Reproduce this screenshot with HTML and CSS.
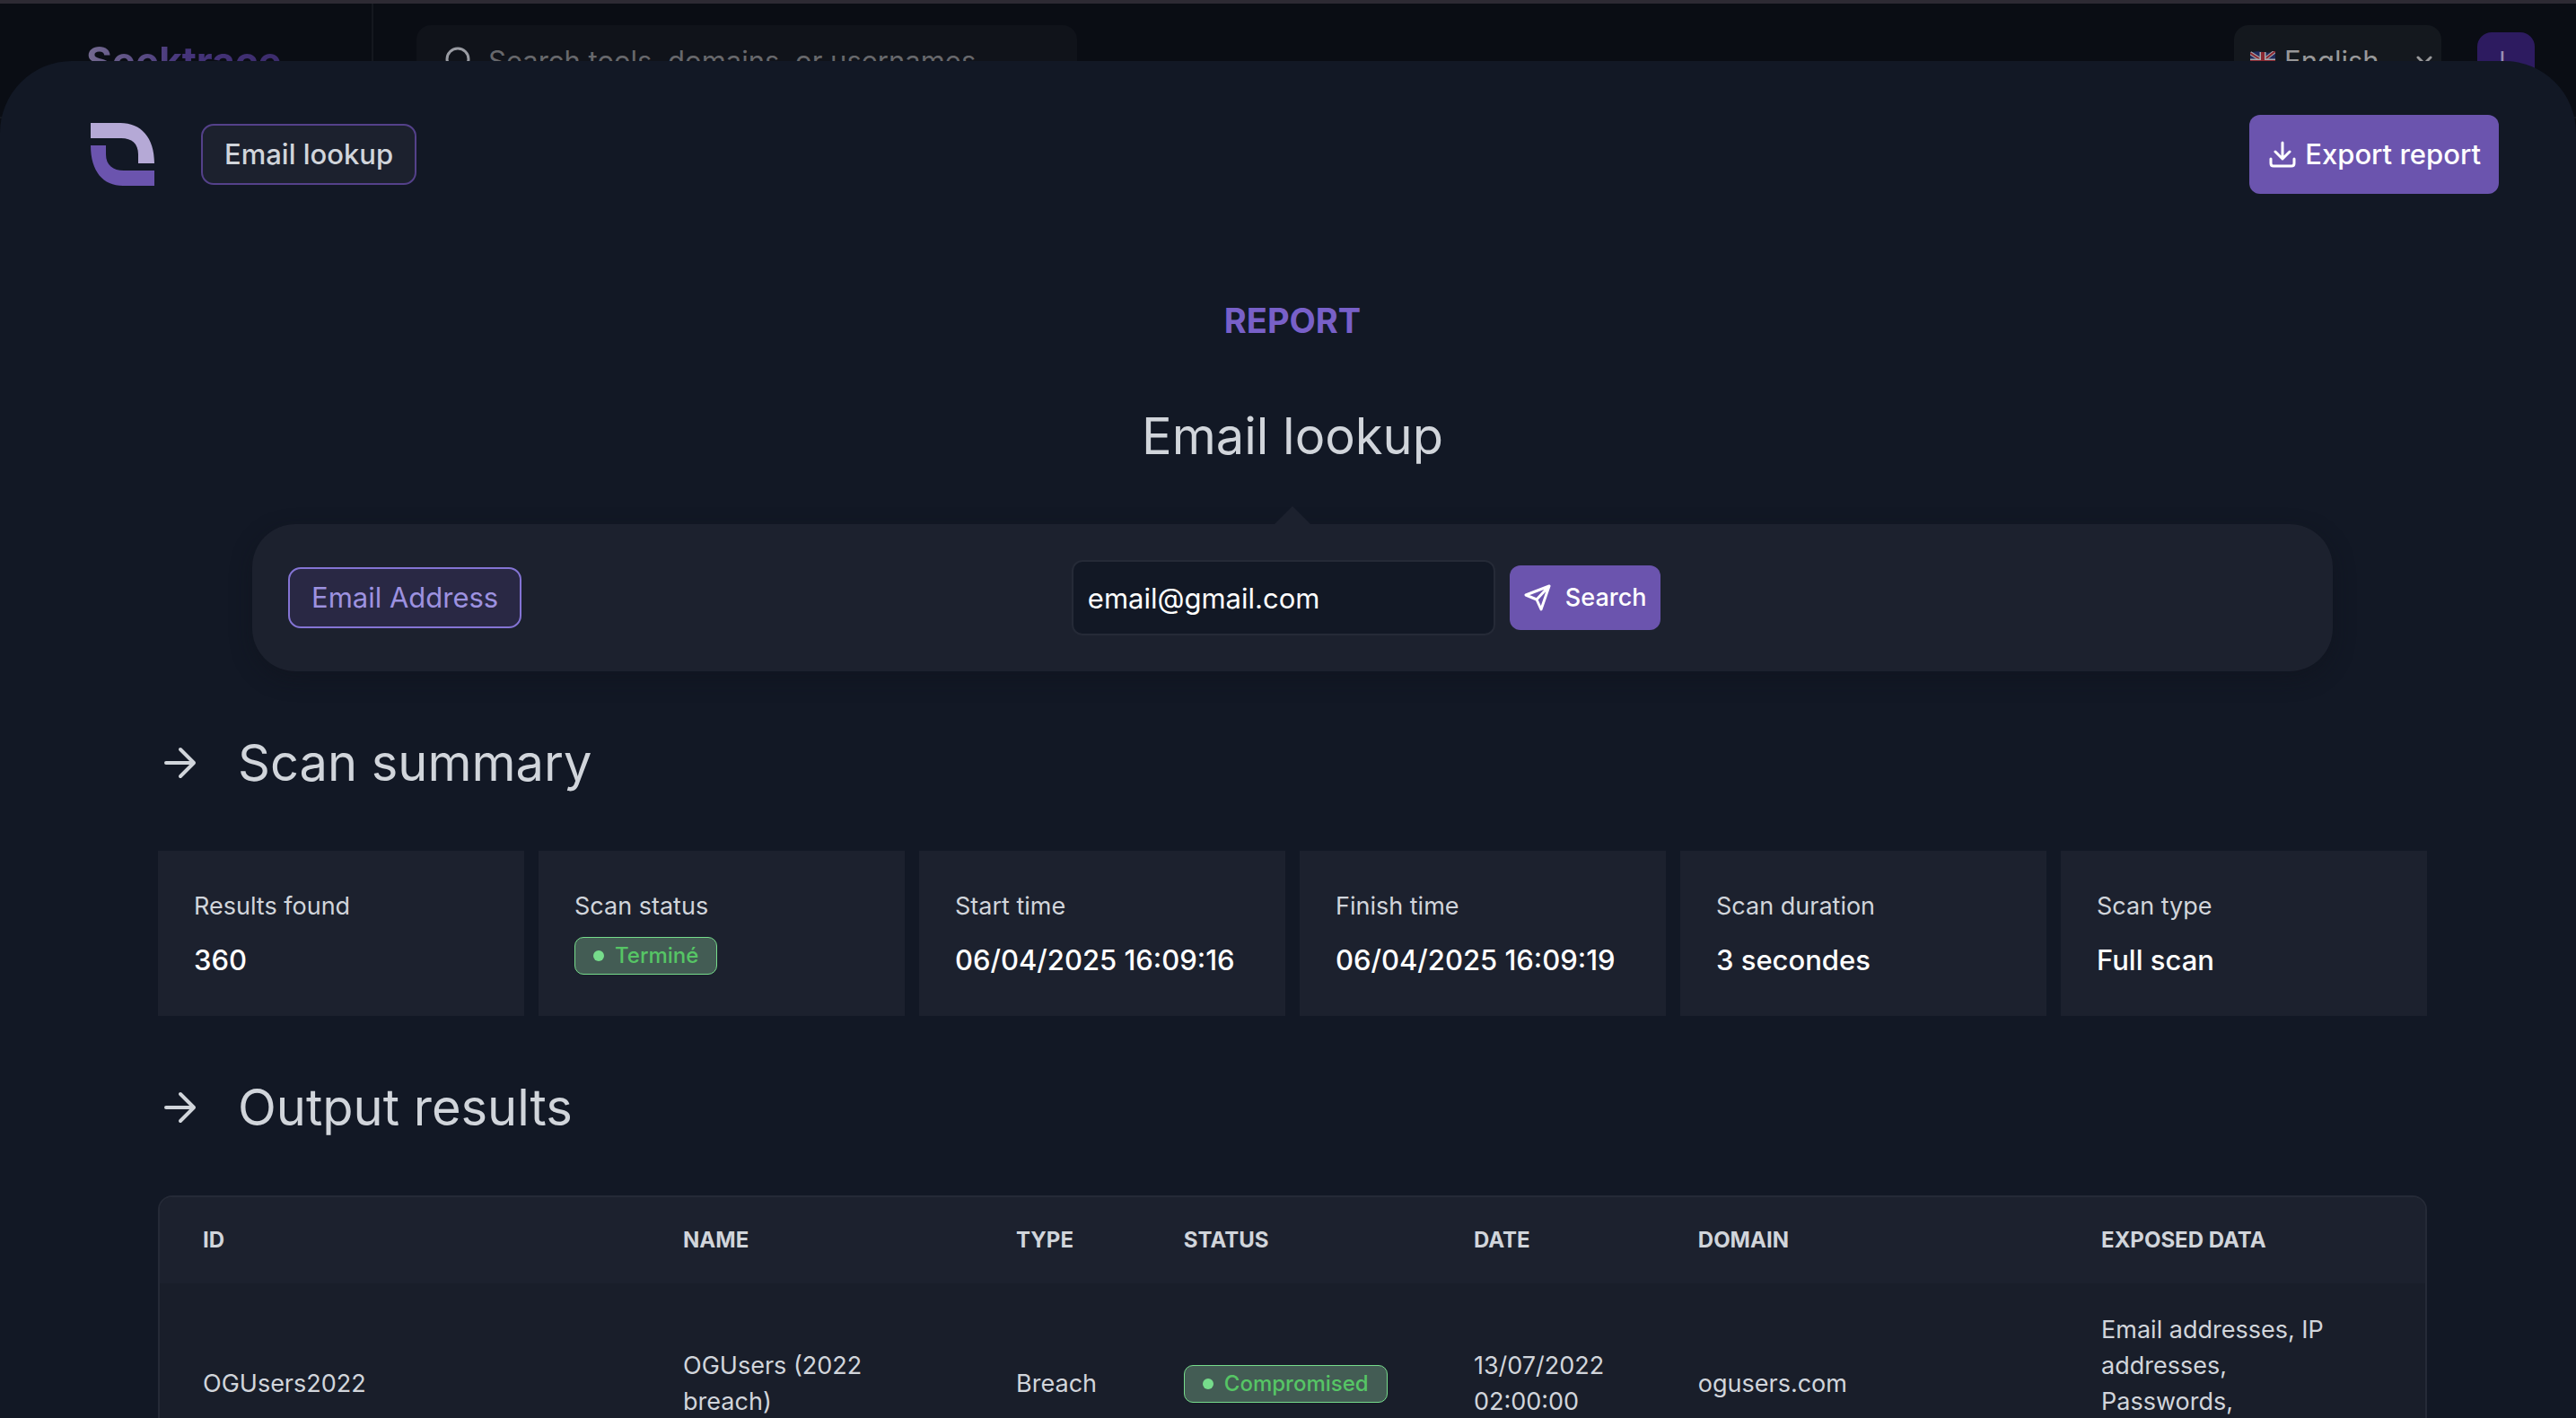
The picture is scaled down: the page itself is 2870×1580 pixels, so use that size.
FILE: index.html
```html
<!DOCTYPE html>
<html lang="en">
<head>
  <meta charset="UTF-8">
  <meta name="viewport" content="width=device-width, initial-scale=1.0">
  <title>Seektrace - Email lookup</title>
  <link rel="stylesheet" href="styles.css">
</head>
<body>

  <!-- Top bar (behind the report) -->
  <header class="topbar">
    <div class="brand"><span>Seektrace</span></div>
    <div class="topbar-main">
      <div class="search-box">
        <svg class="search-icon" viewBox="0 0 32 32" fill="none" stroke="currentColor" stroke-width="3" stroke-linecap="round">
          <circle cx="14" cy="14" r="12"/>
          <path d="M23 23l7 7"/>
        </svg>
        <input type="text" aria-label="Search" placeholder="Search tools, domains, or usernames">
      </div>
      <div class="topbar-right">
        <div class="language">
          <svg class="flag" viewBox="0 0 28 22">
            <path fill="#1f2a5c" d="M0 2Q7-1 14 1T28 0V20Q21 23 14 21T0 22Z"/>
            <path stroke="#a9a9ad" stroke-width="4" d="M0 2L28 20M28 0L0 22"/>
            <path stroke="#8a2730" stroke-width="2" d="M0 2L28 20M28 0L0 22"/>
            <path stroke="#a9a9ad" stroke-width="7" d="M14 1V21M0 12H28"/>
            <path stroke="#8a2730" stroke-width="4" d="M14 1V21M0 12H28"/>
          </svg>
          <select aria-label="Language">
            <option>English</option>
          </select>
          <svg class="chevron" viewBox="0 0 18 12" fill="none" stroke="currentColor" stroke-width="3" stroke-linecap="round" stroke-linejoin="round">
            <path d="M2 2l7 7 7-7"/>
          </svg>
        </div>
        <button class="avatar">L</button>
      </div>
    </div>
  </header>

  <!-- Report -->
  <main class="report">
    <div class="report-header">
      <svg class="logo" viewBox="0 0 71 70">
        <path fill="#b5a9d6" d="M0 0H33C56 0 71 16 71 45H53V35C53 23 46 17 34 17H0Z"/>
        <path fill="#6b54ae" d="M0 25H17V35C17 47 25 53 37 53H71V70H36C14 70 0 54 0 25Z"/>
      </svg>
      <span class="tag">Email lookup</span>
      <button class="btn btn-export">
        <svg class="icon-export" viewBox="0 0 30 30" fill="none" stroke="currentColor" stroke-width="3" stroke-linecap="round" stroke-linejoin="round">
          <path d="M15 2v18M7 12l8 8 8-8M2 20v5q0 3 3 3h20q3 0 3-3v-5"/>
        </svg>
        Export report
      </button>
    </div>

    <div class="report-body">
      <p class="overline">Report</p>
      <h1>Email lookup</h1>

      <form class="lookup">
        <label class="tag tag-active" for="email">Email Address</label>
        <div class="lookup-field">
          <input type="text" id="email" value="email@gmail.com">
          <button type="button" class="btn btn-search">
            <svg class="icon-send" viewBox="0 0 30 30" fill="none" stroke="currentColor" stroke-width="3" stroke-linecap="round" stroke-linejoin="round">
              <path d="M28 2L2 12l12 5 5 11zM28 2L14 17"/>
            </svg>
            Search
          </button>
        </div>
      </form>

      <!-- Summary -->
      <h2>
        <svg class="arrow" viewBox="0 0 36 36" fill="none" stroke="currentColor" stroke-width="4" stroke-linecap="round" stroke-linejoin="round">
          <path d="M2 18h31M18 3l15 15-15 15"/>
        </svg>
        Scan summary
      </h2>
      <div class="cards">
        <div class="card">
          <div class="card-label">Results found</div>
          <div class="card-value">360</div>
        </div>
        <div class="card">
          <div class="card-label">Scan status</div>
          <span class="badge">Terminé</span>
        </div>
        <div class="card">
          <div class="card-label">Start time</div>
          <div class="card-value">06/04/2025 16:09:16</div>
        </div>
        <div class="card">
          <div class="card-label">Finish time</div>
          <div class="card-value">06/04/2025 16:09:19</div>
        </div>
        <div class="card">
          <div class="card-label">Scan duration</div>
          <div class="card-value">3 secondes</div>
        </div>
        <div class="card">
          <div class="card-label">Scan type</div>
          <div class="card-value">Full scan</div>
        </div>
      </div>

      <!-- Results -->
      <h2>
        <svg class="arrow" viewBox="0 0 36 36" fill="none" stroke="currentColor" stroke-width="4" stroke-linecap="round" stroke-linejoin="round">
          <path d="M2 18h31M18 3l15 15-15 15"/>
        </svg>
        Output results
      </h2>
      <div class="table-wrap">
        <table>
          <colgroup>
            <col class="col-id">
            <col class="col-name">
            <col class="col-type">
            <col class="col-status">
            <col class="col-date">
            <col class="col-domain">
            <col class="col-data">
          </colgroup>
          <thead>
            <tr>
              <th>ID</th>
              <th>Name</th>
              <th>Type</th>
              <th>Status</th>
              <th>Date</th>
              <th>Domain</th>
              <th>Exposed data</th>
            </tr>
          </thead>
          <tbody>
            <tr>
              <td>OGUsers2022</td>
              <td>OGUsers (2022 breach)</td>
              <td>Breach</td>
              <td><span class="badge">Compromised</span></td>
              <td>13/07/2022 02:00:00</td>
              <td>ogusers.com</td>
              <td><div class="exposed">Email addresses, IP addresses, Passwords, Usernames</div></td>
            </tr>
          </tbody>
        </table>
      </div>
    </div>
  </main>

</body>
</html>
```

FILE: styles.css
```css
/* General Styles */
* {
  box-sizing: border-box;
}

body {
  margin: 0;
  height: 100vh;
  overflow: hidden;
  font-family: 'Inter', 'Liberation Sans', sans-serif;
  font-size: 27px;
  line-height: 40px;
  color: #d1d5db;
  background-color: #0a0d14;
  border-top: 4px solid #2d2a33;
}

input, select, button {
  font-family: inherit;
  line-height: inherit;
}

/* Top Bar */
.topbar {
  display: flex;
  height: 128px;
  border-bottom: 2px solid #15181f;
}

.brand {
  width: 416px;
  padding: 38px 0 0 96px;
  border-right: 2px solid #15181f;
  font-size: 44px;
  line-height: 52px;
  font-weight: 700;
}

.brand span {
  color: transparent;
  background: linear-gradient(90deg, #746a90, #45347a 50%, #3c2c6c);
  -webkit-background-clip: text;
  background-clip: text;
}

.topbar-main {
  flex: 1;
  display: flex;
  justify-content: space-between;
  align-items: flex-start;
  padding: 24px 46px 0 48px;
}

.search-box {
  display: flex;
  align-items: center;
  gap: 16px;
  width: 736px;
  height: 80px;
  padding: 0 32px;
  border-radius: 16px;
  background-color: #10131a;
}

.search-icon {
  width: 32px;
  height: 32px;
  color: #9a9ca3;
}

.search-box input {
  flex: 1;
  padding: 0;
  border: none;
  outline: none;
  font-size: 31px;
  color: #67686c;
  background: none;
}

.search-box input::placeholder {
  color: #67686c;
}

.topbar-right {
  display: flex;
  align-items: center;
  gap: 40px;
}

.language {
  display: flex;
  align-items: center;
  width: 231px;
  height: 80px;
  padding: 0 10px 0 18px;
  border-radius: 16px;
  color: #98989a;
  background-color: #14181e;
}

.flag {
  width: 28px;
  height: 22px;
}

.language select {
  flex: 1;
  min-width: 0;
  padding: 0 0 0 10px;
  border: none;
  appearance: none;
  font-size: 31px;
  color: inherit;
  background: none;
}

.chevron {
  width: 18px;
  height: 12px;
}

.avatar {
  width: 64px;
  height: 64px;
  padding: 0;
  border: none;
  border-radius: 16px;
  font-size: 27px;
  color: #9a8fb5;
  background-color: #2d1b60;
}

/* Report */
.report {
  position: fixed;
  top: 68px;
  right: 0;
  bottom: 0;
  left: 0;
  overflow: hidden;
  border-radius: 80px 80px 0 0;
  background-color: #121825;
}

.report-header {
  display: flex;
  align-items: center;
  padding: 60px 86px 0 101px;
}

.logo {
  width: 71px;
  height: 70px;
  margin-right: 52px;
}

.tag {
  padding: 12px 24px;
  border: 2px solid #54418a;
  border-radius: 14px;
  font-size: 31px;
  font-weight: 500;
  background-color: #1c212e;
}

.tag-active {
  border-color: #8474d4;
  font-weight: 400;
  color: #9d92e0;
  background-color: #292844;
}

.btn {
  display: flex;
  align-items: center;
  border: none;
  border-radius: 12px;
  font-weight: 500;
  color: #fff;
  background-color: #6b54ae;
  cursor: pointer;
}

.btn:hover {
  background-color: #7860c8;
}

.btn-export {
  gap: 10px;
  height: 88px;
  margin-left: auto;
  padding: 0 20px 0 22px;
  font-size: 31px;
}

.icon-export {
  width: 30px;
  height: 30px;
}

.report-body {
  padding: 117px 166px 0 176px;
}

.overline {
  margin: 0;
  text-align: center;
  text-transform: uppercase;
  font-size: 38px;
  line-height: 48px;
  font-weight: 700;
  color: #7860c8;
}

h1, h2 {
  margin: 0;
  font-size: 56px;
  line-height: 72px;
  font-weight: 400;
}

h1 {
  margin-top: 69px;
  text-align: center;
}

h2 {
  display: flex;
  align-items: center;
  gap: 46px;
  padding-left: 7px;
}

.arrow {
  width: 36px;
  height: 36px;
}

/* Lookup Form */
.lookup {
  position: relative;
  display: grid;
  grid-template-columns: 39% 1fr;
  align-items: center;
  height: 164px;
  margin: 62px 105px 66px;
  padding: 0 40px;
  border-radius: 48px;
  background-color: #1c212e;
  box-shadow: 0 8px 24px rgba(16, 18, 26, 0.4);
}

.lookup::before {
  content: "";
  position: absolute;
  top: -20px;
  left: calc(50% - 20px);
  border: 20px solid transparent;
  border-top: none;
  border-bottom-color: #1c212e;
}

.lookup .tag {
  justify-self: start;
}

.lookup-field {
  display: flex;
  align-items: center;
  gap: 16px;
}

.lookup-field input {
  width: 472px;
  height: 84px;
  padding: 0 16px;
  border: 2px solid #252a37;
  border-radius: 12px;
  outline: none;
  font-size: 31px;
  color: #fff;
  background-color: #121825;
}

.btn-search {
  gap: 16px;
  height: 72px;
  padding: 0 16px;
  font-size: 27px;
}

.icon-send {
  width: 30px;
  height: 30px;
}

/* Summary Cards */
.cards {
  display: grid;
  grid-template-columns: repeat(6, 1fr);
  gap: 16px;
  margin: 62px 0 66px;
}

.card {
  height: 184px;
  padding: 42px 40px;
  background-color: #1c212e;
}

.card-label {
  margin-bottom: 14px;
}

.card-value {
  font-size: 31px;
  font-weight: 500;
  line-height: 52px;
  color: #fff;
}

.badge {
  display: inline-flex;
  align-items: center;
  gap: 12px;
  height: 42px;
  padding: 0 20px;
  border: 1px solid #76dc8b;
  border-radius: 10px;
  font-size: 24px;
  font-weight: 500;
  line-height: 40px;
  color: #56c565;
  background-color: #435c54;
}

.badge::before {
  content: "";
  width: 12px;
  height: 12px;
  border-radius: 50%;
  background-color: #76dc8b;
}

.card .badge {
  vertical-align: top;
}

/* Results Table */
.table-wrap {
  overflow: hidden;
  margin-top: 62px;
  border: 2px solid #252a37;
  border-radius: 16px;
  background-color: #191e2a;
}

table {
  width: 100%;
  table-layout: fixed;
  border-collapse: collapse;
}

.col-id { width: 21.2%; }
.col-name { width: 14.7%; }
.col-type { width: 7.4%; }
.col-status { width: 12.8%; }
.col-date { width: 9.9%; }
.col-domain { width: 17.8%; }
.col-data { width: 16.2%; }

th, td {
  padding: 32px 48px;
  text-align: left;
}

th {
  padding-top: 28px;
  padding-bottom: 28px;
  font-size: 24px;
  font-weight: 700;
  text-transform: uppercase;
  background-color: #1c212e;
}

td .badge {
  vertical-align: middle;
}

.exposed {
  max-width: 272px;
}
```
